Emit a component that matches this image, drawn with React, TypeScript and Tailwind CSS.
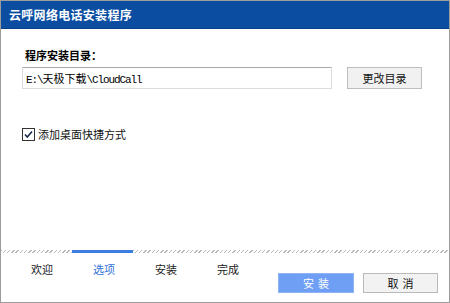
import React from "react";

const cjk = { fontFamily: '"Noto Sans CJK SC", "Noto Sans", sans-serif' };
const mono = { fontFamily: '"Liberation Mono", "Noto Sans CJK SC", monospace' };

export default function App() {
  return (
    <div className="w-[450px] h-[303px] bg-white border border-[#9c9c9c] flex flex-col overflow-hidden" style={cjk}>
      <div className="h-[28px] shrink-0 bg-[#0b4ea1] border-b border-[#073f8a] flex items-center pl-[8px]">
        <span className="text-white font-bold text-[12px] leading-none tracking-[0.3px]">云呼网络电话安装程序</span>
      </div>

      <div className="flex-1 flex flex-col pl-[21px] pt-[18px]">
        <div className="text-[11px] leading-[16px] font-bold text-black pl-[3px]">程序安装目录：</div>
        <div className="flex items-start mt-[4px]">
          <div className="w-[310px] h-[22px] border border-[#dcdcdc] border-t-[#a9a9a9] pl-[3px] pt-[2px] text-[11px] leading-[16px] text-black">
            <span style={mono} className="tracking-[-1.1px]">E:\</span>
            <span>天极下载</span>
            <span style={mono} className="tracking-[-1.1px]">\CloudCall</span>
          </div>
          <div className="ml-[15px] w-[75px] h-[22px] bg-[#f1f1f1] border border-[#bdbdbd] flex items-center justify-center text-[11px] text-[#111]">
            更改目录
          </div>
        </div>
        <div className="flex items-center mt-[37px]">
          <svg width="13" height="13" viewBox="0 0 13 13" className="shrink-0">
            <rect x="0.5" y="0.5" width="12" height="12" fill="#fff" stroke="#333" />
            <path d="M3 6.5 L5.3 9 L10 3.5" fill="none" stroke="#1a2a4a" strokeWidth="1.6" />
          </svg>
          <span className="ml-[3px] text-[11px] leading-[16px] text-[#111]">添加桌面快捷方式</span>
        </div>
      </div>

      <div className="shrink-0 flex h-[3px]">
        <div className="w-[71px] bg-[repeating-linear-gradient(135deg,#b8b8b8_0_1px,#ffffff_1px_3px)]" />
        <div className="w-[61px] bg-[#3b7de0]" />
        <div className="flex-1 bg-[repeating-linear-gradient(135deg,#b8b8b8_0_1px,#ffffff_1px_3px)]" />
      </div>

      <div className="shrink-0 h-[49px] flex items-start">
        <div className="flex pl-[10px] pt-[8px] text-[11px] leading-[16px]">
          <div className="w-[62px] text-center text-[#222]">欢迎</div>
          <div className="w-[62px] text-center text-[#2f6fd8]">选项</div>
          <div className="w-[62px] text-center text-[#222]">安装</div>
          <div className="w-[62px] text-center text-[#222]">完成</div>
        </div>
        <div className="ml-auto mr-[11px] mt-[20px] flex gap-[9px]">
          <div className="w-[76px] h-[20px] bg-[#6f9ff5] border border-[#8fb4f5] flex items-center justify-center text-[11px] text-white tracking-[4px] pl-[4px]">
            安装
          </div>
          <div className="w-[75px] h-[20px] bg-[#f2f2f2] border border-[#b9b9b9] flex items-center justify-center text-[11px] text-[#111] tracking-[4px] pl-[4px]">
            取消
          </div>
        </div>
      </div>
    </div>
  );
}
